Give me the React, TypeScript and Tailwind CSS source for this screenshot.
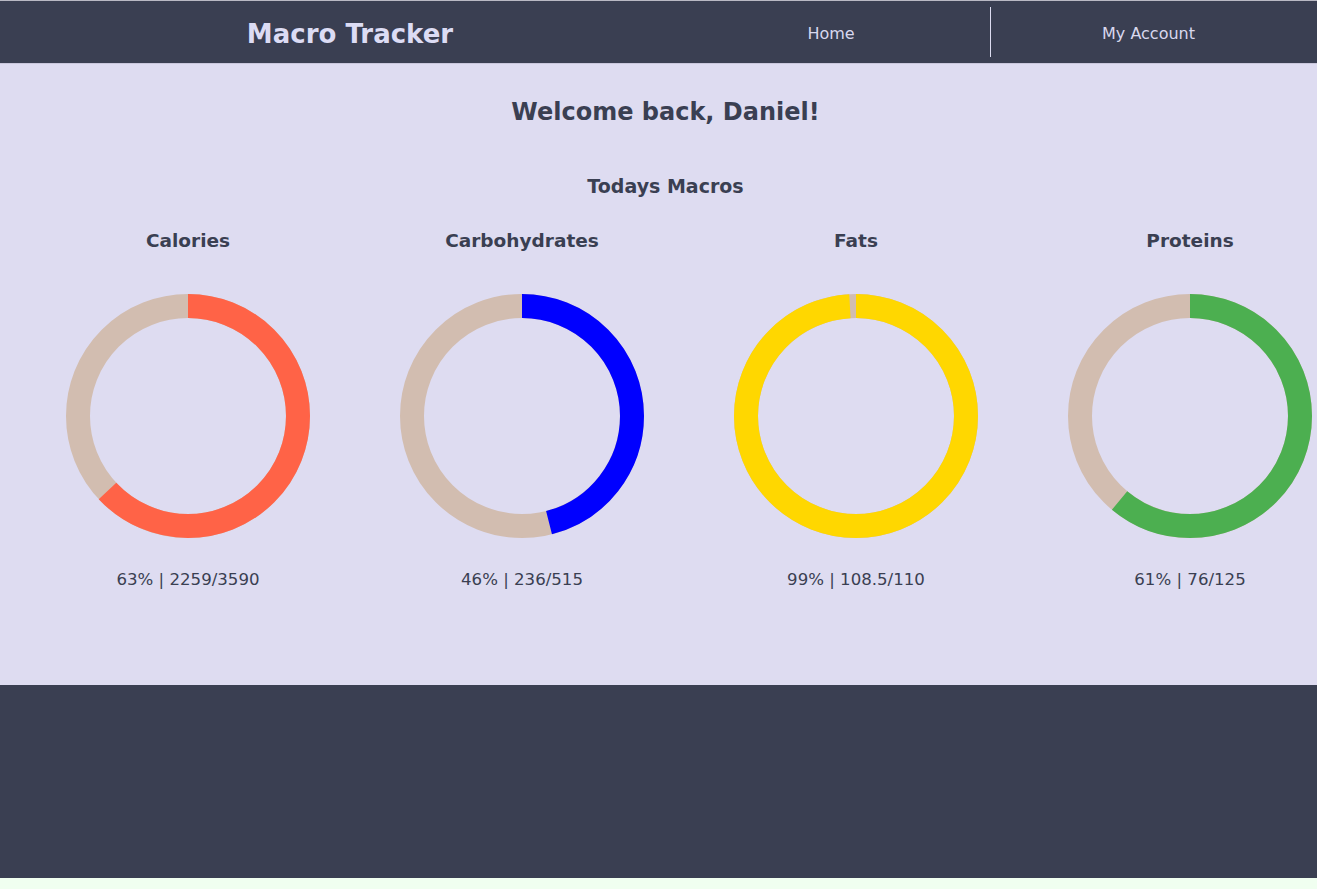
import React from 'react';

const macros = [
  { name: 'Calories', pct: 63, label: '63% | 2259/3590', color: '#ff6347' },
  { name: 'Carbohydrates', pct: 46, label: '46% | 236/515', color: '#0000ff' },
  { name: 'Fats', pct: 99, label: '99% | 108.5/110', color: '#ffd700' },
  { name: 'Proteins', pct: 61, label: '61% | 76/125', color: '#4caf50' },
];

const Donut = ({ pct, color }: { pct: number; color: string }) => {
  const r = 110;
  const c = 2 * Math.PI * r;
  const filled = (c * pct) / 100;
  return (
    <svg width="244" height="244" viewBox="0 0 244 244">
      <g transform="rotate(-90 122 122)">
        <circle cx="122" cy="122" r={r} fill="none" stroke="#d2bdb0" strokeWidth="24" />
        <circle
          cx="122"
          cy="122"
          r={r}
          fill="none"
          stroke={color}
          strokeWidth="24"
          strokeDasharray={`${filled} ${c}`}
        />
      </g>
    </svg>
  );
};

export default function App() {
  return (
    <div className="h-[889px] bg-[#f0fff0] font-['DejaVu_Sans',Verdana,sans-serif] text-[#3a3f52] overflow-hidden">
      {/* Header */}
      <header className="h-[64px] bg-[#3a3f52] border-t border-b border-t-[#b9b9c4] border-b-[#c9c7dc] grid grid-cols-[672px_318px_1fr]">
        <div className="pl-[28px] pt-[3px] flex items-center justify-center">
          <h1 className="text-[26px] font-bold text-[#dcdcf4] leading-none">Macro Tracker</h1>
        </div>
        <a className="pt-[3px] flex items-center justify-center text-[16px] text-[#d8d8ee]">Home</a>
        <a className="my-[6px] pt-[3px] border-l border-[#dcdcf0] pr-[11px] flex items-center justify-center text-[16px] text-[#d8d8ee]">
          My Account
        </a>
      </header>

      {/* Main */}
      <main className="bg-[#dedcf1] pt-[34px] pb-[95px] overflow-hidden">
        <h2 className="pl-[14px] text-center text-[24px] leading-[28px] font-bold">Welcome back, Daniel!</h2>
        <h3 className="mt-[49px] pl-[14px] text-center text-[19px] leading-[22px] font-bold">Todays Macros</h3>
        <div className="mt-[33px] pl-[21px] flex">
          {macros.map((m) => (
            <div key={m.name} className="w-[334px] shrink-0 flex flex-col items-center">
              <h4 className="text-[18.5px] leading-[22px] font-bold">{m.name}</h4>
              <div className="mt-[42px]">
                <Donut pct={m.pct} color={m.color} />
              </div>
              <p className="mt-[32px] text-[16.6px] leading-[20px]">{m.label}</p>
            </div>
          ))}
        </div>
      </main>

      {/* Footer */}
      <footer className="h-[193px] bg-[#3a3f52]" />
    </div>
  );
}
